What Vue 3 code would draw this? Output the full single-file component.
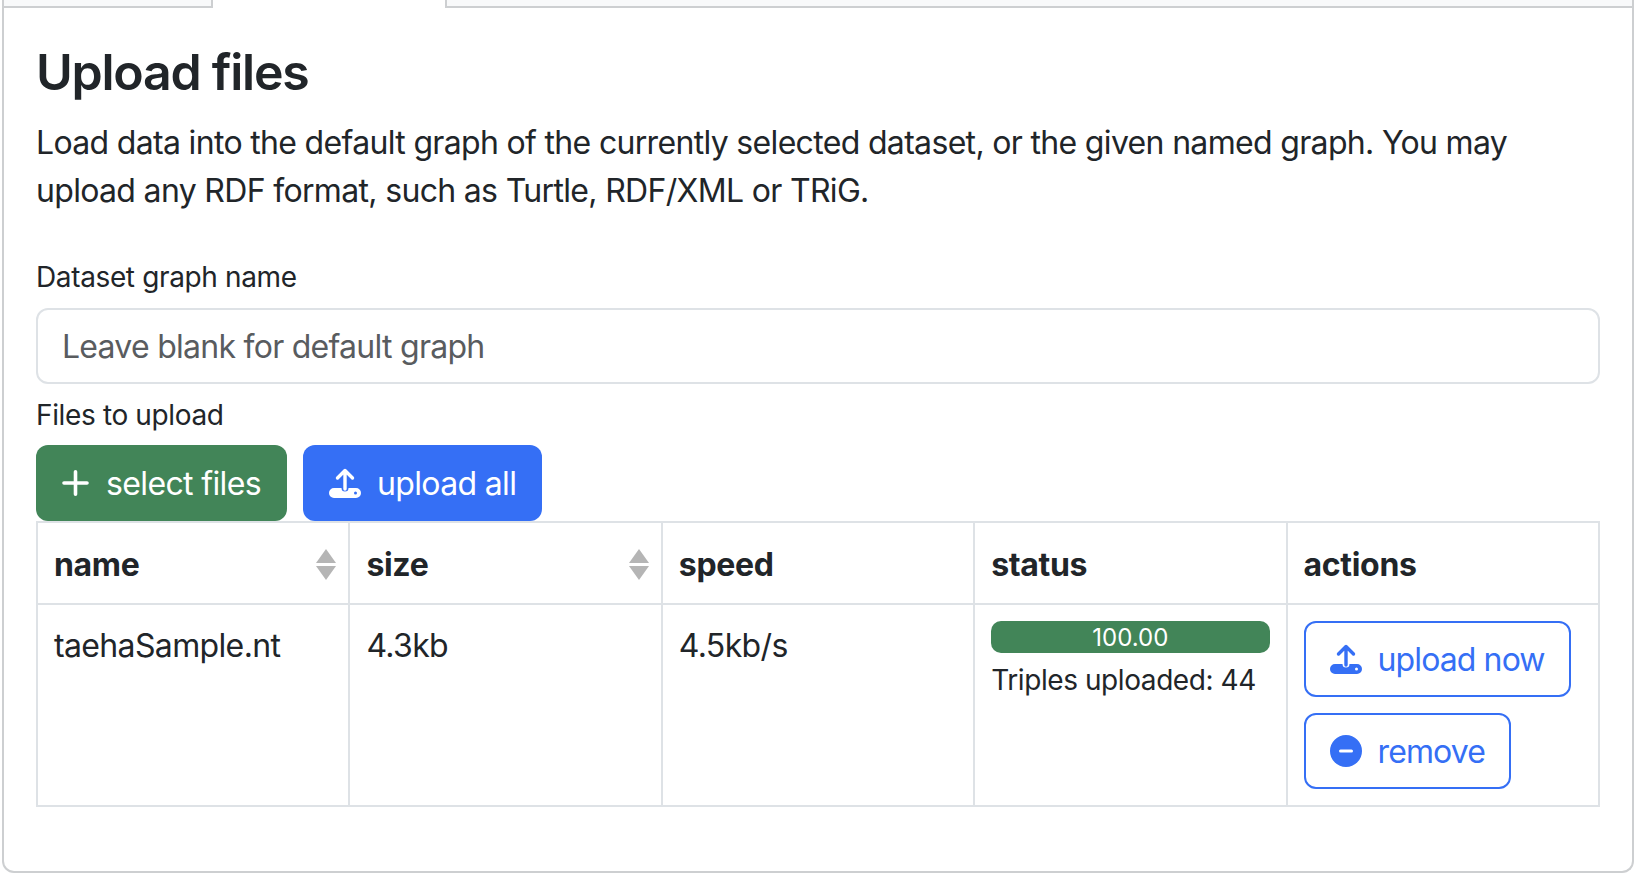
<template>
  <div class="page">
    <div class="tabs">
      <div class="tab"></div>
      <div class="tab active"></div>
      <div class="tab rest"></div>
    </div>
    <div class="panel">
      <h3 class="title">Upload files</h3>
      <p class="intro">
        Load data into the default graph of the currently selected dataset, or the given named graph. You may
        upload any RDF format, such as Turtle, RDF/XML or TRiG.
      </p>
      <label class="label graph-label">Dataset graph name</label>
      <input class="field" type="text" placeholder="Leave blank for default graph" />
      <label class="label files-label">Files to upload</label>
      <div class="toolbar">
        <button type="button" class="btn btn-green">
          <svg class="icon icon-plus" viewBox="0 0 28 26" fill="none" stroke="currentColor" stroke-width="3.6" stroke-linecap="round">
            <path d="M13.5 1.8v22.4M2 13h23"></path>
          </svg>
          select files
        </button>
        <button type="button" class="btn btn-blue">
          <svg class="icon" viewBox="0 0 32 32">
            <path :d="trayPath" fill="currentColor" fill-rule="evenodd"></path>
            <path :d="arrowPath" fill="none" stroke="currentColor" stroke-width="3.4" stroke-linecap="round" stroke-linejoin="round"></path>
          </svg>
          upload all
        </button>
      </div>
      <table class="files">
        <thead>
          <tr>
            <th v-for="col in columns" :key="col.name">
              <div class="th-inner">
                <span>{{ col.name }}</span>
                <span v-if="col.sortable" class="sort"><i class="up"></i><i class="down"></i></span>
              </div>
            </th>
          </tr>
        </thead>
        <tbody>
          <tr>
            <td class="text-cell">taehaSample.nt</td>
            <td class="text-cell">4.3kb</td>
            <td class="text-cell">4.5kb/s</td>
            <td>
              <div class="progress">100.00</div>
              <div class="triples">Triples uploaded: 44</div>
            </td>
            <td>
              <div class="actions">
                <button type="button" class="btn btn-outline">
                  <svg class="icon" viewBox="0 0 32 32">
                    <path :d="trayPath" fill="currentColor" fill-rule="evenodd"></path>
                    <path :d="arrowPath" fill="none" stroke="currentColor" stroke-width="3.4" stroke-linecap="round" stroke-linejoin="round"></path>
                  </svg>
                  upload now
                </button>
                <button type="button" class="btn btn-outline">
                  <svg class="icon" viewBox="0 0 32 32">
                    <path d="M16 0a16 16 0 1 0 0 32a16 16 0 1 0 0-32zM10.5 14.5a1.5 1.5 0 0 0 0 3h11a1.5 1.5 0 0 0 0-3z" fill="currentColor" fill-rule="evenodd"></path>
                  </svg>
                  remove
                </button>
              </div>
            </td>
          </tr>
        </tbody>
      </table>
    </div>
  </div>
</template>

<script setup>
const columns = [
  { name: 'name', sortable: true },
  { name: 'size', sortable: true },
  { name: 'speed', sortable: false },
  { name: 'status', sortable: false },
  { name: 'actions', sortable: false }
]

// tray with a notch for the arrow and a small hole on the right
const trayPath =
  'M5 21h7.5a3.5 3.5 0 0 0 7 0H27a5 5 0 0 1 0 10H5a5 5 0 0 1 0-10zM26.5 24.5a1.5 1.5 0 1 0 0 3a1.5 1.5 0 1 0 0-3z'
const arrowPath = 'M16 22V4M8.5 11L16 3.5L23.5 11'
</script>

<style>
html,
body {
  background: #ffffff;
}
</style>

<style scoped>
.page {
  width: 1640px;
  height: 880px;
  box-sizing: border-box;
  padding: 0 6px 7px 2px;
  font-family: Inter, "Liberation Sans", sans-serif;
  color: #212529;
  display: flex;
  flex-direction: column;
}

.tabs {
  display: flex;
  height: 8px;
  flex-shrink: 0;
}

.tab {
  width: 209px;
  box-sizing: border-box;
  background: #f8f9fa;
  border-left: 2px solid #cdcfd1;
  border-bottom: 2px solid #cdcfd1;
}

.tab.active {
  width: 234px;
  background: #ffffff;
  border-bottom: none;
}

.tab.rest {
  flex: 1;
  border-right: 2px solid #cdcfd1;
}

.panel {
  flex: 1;
  box-sizing: border-box;
  border: 2px solid #cdcfd1;
  border-top: none;
  border-radius: 0 0 12px 12px;
  padding: 30px 32px 0 32px;
}

.title {
  margin: 0;
  font-size: 50px;
  line-height: 68px;
  font-weight: 600;
  letter-spacing: -0.025em;
}

.intro {
  margin: 13px 0 0;
  font-size: 32px;
  line-height: 48px;
  letter-spacing: -0.021em;
}

.label {
  display: block;
  font-size: 28px;
  line-height: 42px;
  letter-spacing: -0.013em;
}

.graph-label {
  margin-top: 41px;
}

.files-label {
  margin-top: 10px;
}

.field {
  display: block;
  width: 100%;
  height: 76px;
  box-sizing: border-box;
  margin-top: 10px;
  padding: 0 24px;
  border: 2px solid #dee2e6;
  border-radius: 12px;
  font-family: inherit;
  font-size: 32px;
  letter-spacing: -0.023em;
  color: #212529;
}

.field::placeholder {
  color: #595c5f;
  opacity: 1;
}

.toolbar {
  display: flex;
  gap: 16px;
  margin-top: 9px;
}

.btn {
  display: inline-flex;
  align-items: center;
  gap: 16px;
  height: 76px;
  box-sizing: border-box;
  padding: 0 24px;
  border: 2px solid transparent;
  border-radius: 12px;
  font-family: inherit;
  font-size: 32px;
  letter-spacing: -0.02em;
  white-space: nowrap;
}

.icon {
  width: 32px;
  height: 32px;
  flex-shrink: 0;
}

.icon-plus {
  width: 28px;
  height: 26px;
}

.btn-green {
  background: #428558;
  color: #ffffff;
}

.btn-blue {
  background: #356ff5;
  color: #ffffff;
}

.btn-outline {
  background: #ffffff;
  border-color: #356ff5;
  color: #356ff5;
  letter-spacing: -0.028em;
}

.files {
  width: 100%;
  table-layout: fixed;
  border-collapse: collapse;
  font-size: 32px;
}

.files th,
.files td {
  border: 2px solid #dee2e6;
  padding: 16px;
  text-align: left;
  vertical-align: top;
}

.files th {
  height: 82px;
  box-sizing: border-box;
  padding-top: 17px;
  padding-bottom: 15px;
  font-weight: 700;
  letter-spacing: -0.01em;
  vertical-align: middle;
}

.files td {
  height: 202px;
  box-sizing: border-box;
  line-height: 48px;
  font-weight: 400;
  letter-spacing: -0.02em;
}

.files td.text-cell {
  padding-top: 17px;
}

.th-inner {
  display: flex;
  align-items: center;
  justify-content: space-between;
  margin-right: -4px;
}

.sort {
  display: flex;
  flex-direction: column;
  gap: 3px;
}

.sort i {
  display: block;
  width: 0;
  height: 0;
  border-left: 10px solid transparent;
  border-right: 10px solid transparent;
}

.sort .up {
  border-bottom: 14px solid #b5b5b5;
}

.sort .down {
  border-top: 14px solid #b5b5b5;
}

.progress {
  height: 32px;
  border-radius: 10px;
  background: #428558;
  color: #ffffff;
  font-size: 24px;
  line-height: 34px;
  text-align: center;
  letter-spacing: 0;
}

.triples {
  margin-top: 6px;
  font-size: 28px;
  line-height: 42px;
  letter-spacing: -0.015em;
}

.actions {
  display: flex;
  flex-direction: column;
  align-items: flex-start;
  gap: 16px;
}
</style>
